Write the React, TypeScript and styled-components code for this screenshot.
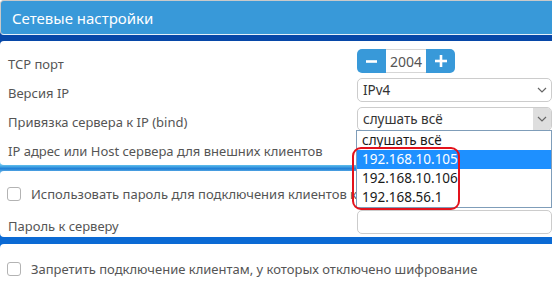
import styled, { createGlobalStyle } from "styled-components";

const GlobalStyle = createGlobalStyle`
  html, body {
    margin: 0;
    padding: 0;
    background: #ffffff;
    overflow: hidden;
  }
  body {
    font-family: "Noto Sans", "Open Sans", sans-serif;
    font-size: 13px;
    color: #555555;
  }
`;

const ipOptions = ["слушать всё", "192.168.10.105", "192.168.10.106", "192.168.56.1"];

function Chevron() {
  return (
    <svg width="10" height="6" viewBox="0 0 10 6">
      <polyline points="1,1 5,5 9,1" fill="none" stroke="#666" strokeWidth="1.2" />
    </svg>
  );
}

function App() {
  return (
    <Page>
      <GlobalStyle />
      <Header>Сетевые настройки</Header>
      <Gap $h={6} $bg="#0748a8" />
      <Card $pt={8} $z={3}>
        <Row>
          <Label>TCP порт</Label>
          <Control>
            <Stepper>
              <StepButton>
                <svg width="11" height="11" viewBox="0 0 11 11">
                  <rect x="0" y="4.2" width="11" height="2.6" fill="#fff" />
                </svg>
              </StepButton>
              <StepValue>2004</StepValue>
              <StepButton>
                <svg width="12" height="12" viewBox="0 0 12 12">
                  <rect x="0" y="4.7" width="12" height="2.6" fill="#fff" />
                  <rect x="4.7" y="0" width="2.6" height="12" fill="#fff" />
                </svg>
              </StepButton>
            </Stepper>
          </Control>
        </Row>
        <Row>
          <Label>Версия IP</Label>
          <Control>
            <Select>
              <SelectText>IPv4</SelectText>
              <Arrow>
                <Chevron />
              </Arrow>
            </Select>
          </Control>
        </Row>
        <Row>
          <Label>Привязка сервера к IP (bind)</Label>
          <Control>
            <Select>
              <SelectText>слушать всё</SelectText>
              <Arrow $open>
                <Chevron />
              </Arrow>
              <OptionList>
                {ipOptions.map((opt, i) => (
                  <Option key={opt} $selected={i === 1}>
                    {opt}
                  </Option>
                ))}
              </OptionList>
              <Highlight />
            </Select>
          </Control>
        </Row>
        <Row>
          <Label>IP адрес или Host сервера для внешних клиентов</Label>
        </Row>
      </Card>
      <Gap $h={6} $bg="linear-gradient(#c9eefc 0%, #5cbcec 30%, #1f7fd6 55%, #a6e2f8 100%)" />
      <Card $pt={8} $z={2}>
        <CheckRow>
          <Checkbox />
          <span>Использовать пароль для подключения клиентов к серверу</span>
        </CheckRow>
        <Row>
          <PasswordLabel>Пароль к серверу</PasswordLabel>
          <Control>
            <TextInput />
          </Control>
        </Row>
      </Card>
      <Gap $h={7} $bg="#0b6ad4" />
      <Card $pt={10} $z={1}>
        <CheckRow>
          <Checkbox />
          <span>Запретить подключение клиентам, у которых отключено шифрование</span>
        </CheckRow>
      </Card>
    </Page>
  );
}

export default App;

const Page = styled.div`
  width: 552px;
  height: 287px;
  overflow: hidden;
  display: flex;
  flex-direction: column;
  background: #ffffff;
`;

const Header = styled.div`
  position: relative;
  z-index: 4;
  height: 33px;
  display: flex;
  align-items: center;
  padding-left: 11px;
  background: #3899d9;
  border: 1px solid #c9c9c9;
  border-right: none;
  border-bottom: 1px solid #e6f1fa;
  border-radius: 4px 0 0 4px;
  color: #ffffff;
  font-size: 15px;
`;

const Gap = styled.div<{ $h: number; $bg: string }>`
  flex: none;
  height: ${(p) => p.$h + 8}px;
  margin: -4px 0;
  background: ${(p) => p.$bg};
`;

const Card = styled.div<{ $pt: number; $z: number }>`
  position: relative;
  z-index: ${(p) => p.$z};
  background: #ffffff;
  border-radius: 4px 0 0 4px;
  padding-top: ${(p) => p.$pt}px;
`;

const Row = styled.div`
  display: grid;
  grid-template-columns: 1fr 195px;
  align-items: center;
  height: 29px;
  padding-left: 8px;
`;

const Label = styled.div`
  white-space: nowrap;
`;

const PasswordLabel = styled(Label)`
  padding-top: 6px;
`;

const Control = styled.div`
  align-self: start;
`;

const Stepper = styled.div`
  display: inline-flex;
  height: 24px;
  border-radius: 5px;
  overflow: hidden;
`;

const StepButton = styled.div`
  width: 29px;
  display: flex;
  align-items: center;
  justify-content: center;
  background: #3899d9;
`;

const StepValue = styled.div`
  width: 40px;
  box-sizing: border-box;
  display: flex;
  align-items: center;
  justify-content: center;
  border-top: 1px solid #d6d6d6;
  border-bottom: 1px solid #d6d6d6;
  font-size: 14px;
  color: #555555;
`;

const Select = styled.div`
  position: relative;
  box-sizing: border-box;
  height: 24px;
  display: flex;
  align-items: center;
  border: 1px solid #cccccc;
  border-radius: 5px;
  background: #ffffff;
`;

const SelectText = styled.span`
  flex: 1;
  padding-left: 5px;
  font-size: 13.5px;
  color: #333333;
`;

const Arrow = styled.div<{ $open?: boolean }>`
  width: 18px;
  align-self: stretch;
  display: flex;
  align-items: center;
  justify-content: center;
  background: ${(p) => (p.$open ? "#dedede" : "transparent")};
  border-radius: 0 4px 4px 0;
`;

const OptionList = styled.div`
  position: absolute;
  z-index: 5;
  top: 22px;
  left: -2px;
  width: 196px;
  box-sizing: border-box;
  border: 1px solid #7f9db9;
  background: #ffffff;
`;

const Option = styled.div<{ $selected?: boolean }>`
  height: 19px;
  line-height: 19px;
  padding-left: 5px;
  font-size: 13.5px;
  color: ${(p) => (p.$selected ? "#ffffff" : "#1a1a1a")};
  background: ${(p) => (p.$selected ? "#1e90ff" : "transparent")};
`;

const Highlight = styled.div`
  position: absolute;
  z-index: 6;
  top: 39px;
  left: -6px;
  width: 108px;
  height: 63px;
  box-sizing: border-box;
  border: 2px solid #e3121c;
  border-radius: 9px;
`;

const TextInput = styled.div`
  margin-top: 2px;
  box-sizing: border-box;
  height: 24px;
  border: 1px solid #cccccc;
  border-radius: 5px;
  background: #ffffff;
`;

const CheckRow = styled.div`
  display: flex;
  align-items: center;
  gap: 10px;
  height: 29px;
  padding-left: 7px;
  white-space: nowrap;
`;

const Checkbox = styled.div`
  flex: none;
  width: 14px;
  height: 14px;
  box-sizing: border-box;
  border: 1px solid #b3b3b3;
  border-radius: 3px;
  background: #ffffff;
`;
